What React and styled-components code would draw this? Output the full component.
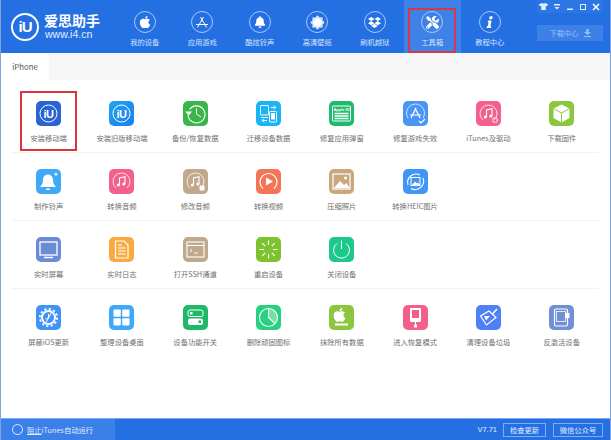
import styled, { createGlobalStyle } from "styled-components"
import { FaApple, FaBell, FaDropbox, FaTools, FaInfo, FaTshirt } from "react-icons/fa"

const GlobalStyle = createGlobalStyle`
    html, body {
        margin: 0;
        padding: 0;
        background: #fff;
    }
    body {
        font-family: "Noto Sans CJK SC", "Liberation Sans", sans-serif;
    }
`

const Window = styled.div`
    width: 611px;
    height: 440px;
    display: flex;
    flex-direction: column;
    overflow: hidden;
    box-sizing: border-box;
    border-left: 1px solid #7fa6dc;
    border-right: 1px solid #7fa6dc;
`
const Header = styled.header`
    height: 53px;
    flex: none;
    display: flex;
    background: #2470e2;
    margin: 0 -1px;
`
const Logo = styled.div`
    width: 116px;
    flex: none;
    display: flex;
    align-items: center;
    gap: 5px;
    padding: 0 0 0 11px;
    box-sizing: border-box;
    color: #fff;
`
const LogoMark = styled.div`
    width: 28px;
    height: 28px;
    flex: none;
    border: 2px solid #fff;
    border-radius: 50%;
    box-sizing: border-box;
    display: flex;
    align-items: center;
    justify-content: center;
    font: bold 15px/1 "Liberation Sans", sans-serif;
    letter-spacing: -1px;
`
const LogoText = styled.div`
    display: flex;
    flex-direction: column;
    margin-top: -1px;
`
const LogoName = styled.span`
    font-size: 14px;
    line-height: 15px;
    font-weight: 700;
    white-space: nowrap;
`
const LogoUrl = styled.span`
    font: 10.500px/12px "Liberation Sans", sans-serif;
    color: #e4eefc;
    margin-left: 1px;
`
const Nav = styled.nav`
    display: flex;
`
const NavItem = styled.div`
    width: 57.5px;
    height: 53px;
    position: relative;
    display: flex;
    flex-direction: column;
    align-items: center;
    padding-top: 11px;
    box-sizing: border-box;
    background: ${(p) => (p.$active ? "#3e82e8" : "transparent")};
    &::after {
        content: ${(p) => (p.$active ? '""' : "none")};
        position: absolute;
        left: 4.5px;
        top: 8px;
        width: 48px;
        height: 45px;
        box-sizing: border-box;
        border: 2px solid #cf3a4c;
    }
`
const NavCircle = styled.div`
    width: 22px;
    height: 22px;
    box-sizing: border-box;
    border: 1px solid #a9c9f6;
    border-radius: 50%;
    display: flex;
    align-items: center;
    justify-content: center;
    color: #fff;
`
const NavLabel = styled.span`
    margin-top: 3px;
    font-size: 7.3px;
    line-height: 12px;
    color: #d4e3fa;
    white-space: nowrap;
`
const SlantedInfo = styled(FaInfo)`
    transform: skewX(-12deg);
`
const HeaderRight = styled.div`
    margin-left: auto;
    width: 74px;
    padding-right: 8px;
    box-sizing: border-box;
    display: flex;
    flex-direction: column;
    align-items: stretch;
`
const Controls = styled.div`
    height: 13px;
    display: flex;
    align-items: center;
    justify-content: space-between;
    padding: 0 3px 0 2px;
    background: #2d77e5;
    color: #e3eefc;
`
const DownloadBtn = styled.div`
    margin-top: 12px;
    height: 16px;
    background: #3c80e8;
    color: #9cc0f3;
    font-size: 7.3px;
    display: flex;
    align-items: center;
    justify-content: center;
    gap: 5px;
`
const TabBar = styled.div`
    height: 27px;
    flex: none;
    display: flex;
    background: #f6f6f7;
`
const Tab = styled.div`
    width: 48px;
    background: #fff;
    display: flex;
    align-items: center;
    justify-content: center;
    font-size: 7.800px;
    color: #555;
`
const Content = styled.main`
    flex: 1;
    padding: 5px 12px 0 11px;
    background: #fff;
`
const Row = styled.div`
    height: 68px;
    display: grid;
    grid-template-columns: repeat(8, 73.3px);
    border-bottom: ${(p) => (p.$last ? "none" : "1px solid #f3f3f3")};
    box-sizing: border-box;
`
const Cell = styled.div`
    position: relative;
    display: flex;
    flex-direction: column;
    align-items: center;
    padding-top: 16px;
    &::after {
        content: ${(p) => (p.$marked ? '""' : "none")};
        position: absolute;
        left: 8px;
        top: 6px;
        width: 57px;
        height: 60px;
        box-sizing: border-box;
        border: 2px solid #d8363f;
    }
`
const Tile = styled.div`
    width: 25px;
    height: 25px;
    border-radius: 5px;
    background: ${(p) => p.$bg};
    display: flex;
    align-items: center;
    justify-content: center;
    overflow: hidden;
`
const Label = styled.span`
    margin-top: 6px;
    font-size: 7.3px;
    line-height: 12px;
    color: #707070;
    white-space: nowrap;
`
const Footer = styled.footer`
    height: 22px;
    flex: none;
    display: flex;
    align-items: center;
    background: #2470e2;
    border-top: 1px solid #7aaaf0;
    box-sizing: border-box;
    margin: 0 -1px;
    color: #e3eefc;
`
const FooterLeft = styled.div`
    width: 115px;
    height: 100%;
    display: flex;
    align-items: center;
    gap: 4px;
    padding-left: 12px;
    box-sizing: border-box;
    background: #3b80e8;
    font-size: 7.3px;
`
const Ring = styled.span`
    width: 9px;
    height: 9px;
    border: 1px solid #e3eefc;
    border-radius: 50%;
`
const Underlined = styled.span`
    text-decoration: underline;
`
const Version = styled.span`
    margin-left: auto;
    font: 7.5px "Liberation Sans", sans-serif;
    margin-right: 6px;
`
const FooterBtn = styled.div`
    width: ${(p) => p.$w}px;
    height: 14px;
    margin-right: ${(p) => p.$mr}px;
    box-sizing: border-box;
    border: 1px solid #7fadf0;
    font-size: 7.3px;
    display: flex;
    align-items: center;
    justify-content: center;
`

const W = "#fff"
const Svg = ({ children }) => (
    <svg width="25" height="25" viewBox="0 0 25 25" fill="none">{children}</svg>
)

const IuIcon = () => (
    <Svg>
        <circle cx="12.5" cy="12.5" r="8.5" stroke={W} strokeWidth="1" />
        <text x="12.5" y="16.5" textAnchor="middle" fill={W} fontSize="11" fontWeight="700" fontFamily="Liberation Sans" letterSpacing="-0.6">iU</text>
    </Svg>
)
const BackupIcon = () => (
    <Svg>
        <path d="M6.500 8.500a8.500 8.500 0 1 1-1.500 5.500" stroke={W} strokeWidth="1.100" />
        <path d="M2 10.500h7L6 14.500z" fill={W} />
        <path d="M13.500 7.500v5.500l4.500 3" stroke={W} strokeWidth="1" />
    </Svg>
)
const MigrateIcon = () => (
    <Svg>
        <rect x="4.500" y="4.500" width="8" height="9.500" rx=".6" stroke={W} strokeWidth="1" />
        <path d="M5 16.500h7" stroke={W} strokeWidth="1.200" />
        <rect x="13.500" y="10.500" width="7" height="10.500" rx="1" stroke={W} strokeWidth="1" />
        <rect x="15" y="12" width="4" height="6.500" fill={W} />
        <path d="M15 6.500h4.500M17.800 4.500l2 2-2 2" stroke={W} strokeWidth="1" />
        <path d="M11 19.500H6.500M8.200 17.500l-2 2 2 2" stroke={W} strokeWidth="1" />
    </Svg>
)
const CardIcon = () => (
    <Svg>
        <rect x="3.500" y="5" width="18" height="15" rx="1" stroke={W} strokeWidth="1" />
        <text x="12.5" y="10" textAnchor="middle" fill={W} fontSize="4" fontWeight="700" fontFamily="Liberation Sans">Apple ID</text>
        <path d="M5.500 12.500h14M5.500 15h14M5.500 17.500h14" stroke={W} strokeWidth="1.300" />
    </Svg>
)
const StoreIcon = () => (
    <Svg>
        <path d="M5 17a9 9 0 1 1 15 0" stroke="#cfe2fd" strokeWidth="1" />
        <path d="M8 17l5-10M17 17L12 7M7 14h11" stroke={W} strokeWidth="1.200" />
        <path d="M16 20l2 2 4-4" stroke={W} strokeWidth="1.200" />
    </Svg>
)
const MusicIcon = ({ gear, lock }) => (
    <Svg>
        <path d="M7 19a8.500 8.500 0 1 1 11 0" stroke="#ffffffcc" strokeWidth="1" />
        <path d="M10.500 16V9l5.500-1.300V15" stroke={W} strokeWidth="1.100" />
        <circle cx="9.300" cy="16" r="1.500" fill={W} />
        <circle cx="14.800" cy="15" r="1.500" fill={W} />
        {gear && <circle cx="19" cy="19" r="2.400" stroke={W} strokeWidth="1.300" strokeDasharray="1 .6" />}
        {lock && <rect x="16.500" y="16.500" width="5" height="5" rx="1" fill={W} />}
    </Svg>
)
const CubeIcon = () => (
    <Svg>
        <path d="M12.500 3.500l8 4v9.500l-8 4.500-8-4.500V7.500z" fill={W} />
        <path d="M4.500 7.500l8 4.500 8-4.500M12.500 12v9.500" stroke="#8cc63f" strokeWidth="1" />
    </Svg>
)
const BellIcon = () => (
    <Svg>
        <path d="M12 5.500c3 0 5 2.300 5 5.200 0 3.500 1 5 2.500 6.300v1h-15v-1C6 15.700 7 14.200 7 10.700c0-2.900 2-5.200 5-5.200z" fill={W} />
        <rect x="10" y="19.500" width="4" height="1.500" rx=".7" fill={W} />
        <path d="M20 3.500v3.500M18.200 5.200h3.500" stroke={W} strokeWidth="1" />
    </Svg>
)
const VideoIcon = () => (
    <Svg>
        <path d="M7 19.500a8.500 8.500 0 1 1 11 0" stroke={W} strokeWidth="1.200" />
        <path d="M10 8.500l7 4-7 4z" fill={W} />
    </Svg>
)
const PhotoIcon = () => (
    <Svg>
        <rect x="4" y="5" width="17" height="15" stroke={W} strokeWidth="1.200" />
        <path d="M5 19l6-7 4 4 2.500-2 3 5z" fill={W} />
        <circle cx="16.500" cy="9" r="1.500" fill={W} />
    </Svg>
)
const HeicIcon = () => (
    <Svg>
        <path d="M5 16a8.500 8.500 0 0 1 12-10M20 9a8.500 8.500 0 0 1-12 10.500" stroke={W} strokeWidth="1.100" />
        <rect x="8" y="8.500" width="9" height="8" stroke={W} strokeWidth="1" />
        <path d="M9 16l3-3.500 2 2 1-1 2 2.500z" fill={W} />
    </Svg>
)
const ScreenIcon = () => (
    <Svg>
        <rect x="4" y="5" width="17" height="13" stroke={W} strokeWidth="1.300" />
        <path d="M8 20.500h9" stroke={W} strokeWidth="1.300" />
    </Svg>
)
const LogIcon = () => (
    <Svg>
        <path d="M6.500 4h8.500l4 4v13H6.500z" stroke={W} strokeWidth="1.200" />
        <path d="M9 11h7.500M9 14h7.500M9 17h7.500M9 8h4" stroke={W} strokeWidth="1" />
    </Svg>
)
const TerminalIcon = () => (
    <Svg>
        <rect x="4" y="5" width="17" height="15" stroke={W} strokeWidth="1.100" />
        <path d="M4 8.500h17" stroke={W} strokeWidth="1.100" />
        <path d="M7 12l2 1.500-2 1.500M11 16h4" stroke={W} strokeWidth=".9" />
    </Svg>
)
const RestartIcon = () => (
    <Svg>
        <path d="M12.500 3.500v4.500M12.500 17v4.500M3.500 12.500H8M17 12.500h4.500M6.200 6.200l3 3M15.800 15.800l3 3M18.800 6.200l-3 3M9.200 15.800l-3 3" stroke={W} strokeWidth="1.200" />
    </Svg>
)
const PowerIcon = () => (
    <Svg>
        <path d="M8 6.500a8 8 0 1 0 9 0" stroke={W} strokeWidth="1" />
        <path d="M12.500 3.500v8.500" stroke={W} strokeWidth="1" />
    </Svg>
)
const GearIcon = () => (
    <Svg>
        <circle cx="12.500" cy="12.500" r="6.500" stroke={W} strokeWidth="2" />
        <circle cx="12.500" cy="12.500" r="8.600" stroke={W} strokeWidth="1.800" strokeDasharray="2.200 2.300" />
        <path d="M15.500 7.500l-5.500 10M12.500 9v4l-3 1" stroke={W} strokeWidth="1" />
    </Svg>
)
const GridIcon = () => (
    <Svg>
        <rect x="4.500" y="4.500" width="7.300" height="7.300" rx="1" fill={W} />
        <rect x="13.200" y="4.500" width="7.300" height="7.300" rx="1" fill={W} />
        <rect x="4.500" y="13.200" width="7.300" height="7.300" rx="1" fill={W} />
        <rect x="13.200" y="13.200" width="7.300" height="7.300" rx="1" fill={W} />
    </Svg>
)
const SwitchIcon = () => (
    <Svg>
        <rect x="5" y="5" width="15" height="6.500" rx="2" stroke={W} strokeWidth="1" />
        <rect x="7" y="7" width="2.500" height="2.500" fill={W} />
        <rect x="5" y="13.500" width="15" height="6.500" rx="2" fill={W} />
        <rect x="15.500" y="15.500" width="2.500" height="2.500" fill="#1fb868" />
    </Svg>
)
const PieIcon = () => (
    <Svg>
        <circle cx="12.500" cy="12.500" r="9" stroke={W} strokeWidth="1.100" />
        <path d="M12.500 3.500v9l6.500 6.200a9 9 0 0 0-6.500-15.200z" fill={W} fillOpacity=".35" />
        <path d="M12.500 3.500v9l6.500 6.200" stroke={W} strokeWidth="1.100" />
    </Svg>
)
const EraseIcon = () => (
    <Svg>
        <rect x="6" y="18.500" width="13" height="2" fill={W} />
        <g transform="translate(4.500 2) scale(.031)">
            <path fill={W} d="M318.700 268.700c-.2-36.700 16.400-64.400 50-84.800-18.800-26.900-47.200-41.700-84.700-44.600-35.500-2.800-74.300 20.700-88.500 20.700-15 0-49.400-19.700-76.400-19.700C63.300 141.200 4 184.800 4 273.500q0 39.300 14.400 81.200c12.800 36.700 59 126.700 107.200 125.200 25.200-.6 43-17.900 75.800-17.900 31.800 0 48.300 17.900 76.400 17.900 48.600-.7 90.400-82.500 102.600-119.300-65.200-30.700-61.700-90-61.700-91.900zm-56.600-164.200c27.300-32.400 24.800-61.900 24-72.500-24.100 1.400-52 16.400-67.900 34.900-17.500 19.800-27.800 44.300-25.600 71.900 26.100 2 49.900-11.400 69.500-34.300z" />
        </g>
    </Svg>
)
const RecoveryIcon = () => (
    <Svg>
        <rect x="7" y="3" width="11" height="14" rx="1" fill={W} />
        <rect x="9" y="5" width="7" height="8" fill="#f4608c" />
        <path d="M12.500 17v3" stroke={W} strokeWidth="1.200" />
        <rect x="11" y="19.500" width="3" height="3" rx=".6" fill={W} />
    </Svg>
)
const BroomIcon = () => (
    <Svg>
        <path d="M21 4l-4.500 5" stroke={W} strokeWidth="1.400" />
        <path d="M13 6l7 6.500-9.500 7.500-6-9z" stroke={W} strokeWidth="1.200" />
        <path d="M8 11l6 0-4 4.500z" fill={W} />
    </Svg>
)
const TabletIcon = () => (
    <Svg>
        <rect x="5.500" y="4" width="13" height="17" rx="1.500" stroke={W} strokeWidth="1.200" />
        <rect x="7.500" y="6.500" width="9" height="10" stroke={W} strokeWidth=".8" />
        <rect x="16" y="8" width="4.500" height="5" fill={W} />
    </Svg>
)

const rows = [
    [
        { label: "安装移动端", bg: "#2a63d4", icon: <IuIcon />, marked: true },
        { label: "安装旧版移动端", bg: "linear-gradient(135deg,#1ea6ef,#1c7cf1)", icon: <IuIcon /> },
        { label: "备份/恢复数据", bg: "#39b54a", icon: <BackupIcon /> },
        { label: "迁移设备数据", bg: "#17b5f5", icon: <MigrateIcon /> },
        { label: "修复应用弹窗", bg: "#1fbb6c", icon: <CardIcon /> },
        { label: "修复游戏失效", bg: "#4a94f5", icon: <StoreIcon /> },
        { label: "iTunes及驱动", bg: "#f4608c", icon: <MusicIcon gear /> },
        { label: "下载固件", bg: "#8cc63f", icon: <CubeIcon /> },
    ],
    [
        { label: "制作铃声", bg: "#3fa9f9", icon: <BellIcon /> },
        { label: "转换音频", bg: "#f4608c", icon: <MusicIcon /> },
        { label: "修改音频", bg: "#bfa88c", icon: <MusicIcon lock /> },
        { label: "转换视频", bg: "#f47555", icon: <VideoIcon /> },
        { label: "压缩照片", bg: "#c9a880", icon: <PhotoIcon /> },
        { label: "转换HEIC图片", bg: "#4294f5", icon: <HeicIcon /> },
    ],
    [
        { label: "实时屏幕", bg: "#6c8bd5", icon: <ScreenIcon /> },
        { label: "实时日志", bg: "#f9a93f", icon: <LogIcon /> },
        { label: "打开SSH通道", bg: "#bfa88c", icon: <TerminalIcon /> },
        { label: "重启设备", bg: "#7dc22f", icon: <RestartIcon /> },
        { label: "关闭设备", bg: "#1cc88a", icon: <PowerIcon /> },
    ],
    [
        { label: "屏蔽iOS更新", bg: "#4094f5", icon: <GearIcon /> },
        { label: "整理设备桌面", bg: "#3fa9f9", icon: <GridIcon /> },
        { label: "设备功能开关", bg: "#1fb868", icon: <SwitchIcon /> },
        { label: "删除顽固图标", bg: "#27d17f", icon: <PieIcon /> },
        { label: "抹除所有数据", bg: "#8cc63f", icon: <EraseIcon /> },
        { label: "进入恢复模式", bg: "#f4608c", icon: <RecoveryIcon /> },
        { label: "清理设备垃圾", bg: "#4f80f5", icon: <BroomIcon /> },
        { label: "反激活设备", bg: "#728fd5", icon: <TabletIcon /> },
    ],
]

const Flower = () => (
    <svg width="15" height="15" viewBox="0 0 14 14" fill="#fff">
        {[0, 45, 90, 135].map((a) => (
            <ellipse key={a} cx="7" cy="7" rx="2.600" ry="6.500" transform={`rotate(${a} 7 7)`} opacity=".8" />
        ))}
    </svg>
)
const StoreGlyph = () => (
    <svg width="16" height="16" viewBox="0 0 16 16" fill="none" stroke="#fff" strokeWidth="1">
        <path d="M3.500 13.500L9.500 3M12.500 13.500L6.500 3M2 10.500h12" />
    </svg>
)
const MenuGlyph = () => (
    <svg width="8" height="8" viewBox="0 0 8 8" fill="#e3eefc">
        <rect x="1" y="1" width="6" height="1.500" />
        <path d="M1.500 4h5L4 6.500z" />
    </svg>
)
const MinGlyph = () => (
    <svg width="8" height="8" viewBox="0 0 8 8" fill="#e3eefc">
        <rect x="1" y="5.500" width="6" height="1.500" />
    </svg>
)
const MaxGlyph = () => (
    <svg width="8" height="8" viewBox="0 0 8 8" fill="none" stroke="#e3eefc">
        <rect x="1.500" y="1.500" width="5" height="5" />
    </svg>
)
const CloseGlyph = () => (
    <svg width="8" height="8" viewBox="0 0 8 8" fill="none" stroke="#fff" strokeWidth="1.500">
        <path d="M1 1l6 6M7 1L1 7" />
    </svg>
)
const DownGlyph = () => (
    <svg width="7" height="8" viewBox="0 0 7 8" fill="#9cc0f3">
        <path d="M2.300 0h2.400v3H7L3.500 6 0 3h2.300zM0 7h7v1H0z" />
    </svg>
)

const navItems = [
    { label: "我的设备", icon: <FaApple size={14} /> },
    { label: "应用游戏", icon: <StoreGlyph /> },
    { label: "酷炫铃声", icon: <FaBell size={12} /> },
    { label: "高清壁纸", icon: <Flower /> },
    { label: "刷机越狱", icon: <FaDropbox size={13} /> },
    { label: "工具箱", icon: <FaTools size={13} />, active: true },
    { label: "教程中心", icon: <SlantedInfo size={12} /> },
]

const App = () => {
    return (
        <Window>
            <GlobalStyle />
            <Header>
                <Logo>
                    <LogoMark>iU</LogoMark>
                    <LogoText>
                        <LogoName>爱思助手</LogoName>
                        <LogoUrl>www.i4.cn</LogoUrl>
                    </LogoText>
                </Logo>
                <Nav>
                    {navItems.map((item) => (
                        <NavItem key={item.label} $active={item.active}>
                            <NavCircle>{item.icon}</NavCircle>
                            <NavLabel>{item.label}</NavLabel>
                        </NavItem>
                    ))}
                </Nav>
                <HeaderRight>
                    <Controls>
                        <FaTshirt size={9} />
                        <MenuGlyph />
                        <MinGlyph />
                        <MaxGlyph />
                        <CloseGlyph />
                    </Controls>
                    <DownloadBtn>
                        <span>下载中心</span>
                        <DownGlyph />
                    </DownloadBtn>
                </HeaderRight>
            </Header>
            <TabBar>
                <Tab>iPhone</Tab>
            </TabBar>
            <Content>
                {rows.map((row, i) => (
                    <Row key={i} $last={i === rows.length - 1}>
                        {row.map((tool) => (
                            <Cell key={tool.label} $marked={tool.marked}>
                                <Tile $bg={tool.bg}>{tool.icon}</Tile>
                                <Label>{tool.label}</Label>
                            </Cell>
                        ))}
                    </Row>
                ))}
            </Content>
            <Footer>
                <FooterLeft>
                    <Ring />
                    <span><Underlined>阻止</Underlined>iTunes自动运行</span>
                </FooterLeft>
                <Version>V7.71</Version>
                <FooterBtn $w={43} $mr={7}>检查更新</FooterBtn>
                <FooterBtn $w={50} $mr={8}>微信公众号</FooterBtn>
            </Footer>
        </Window>
    )
}

export default App
